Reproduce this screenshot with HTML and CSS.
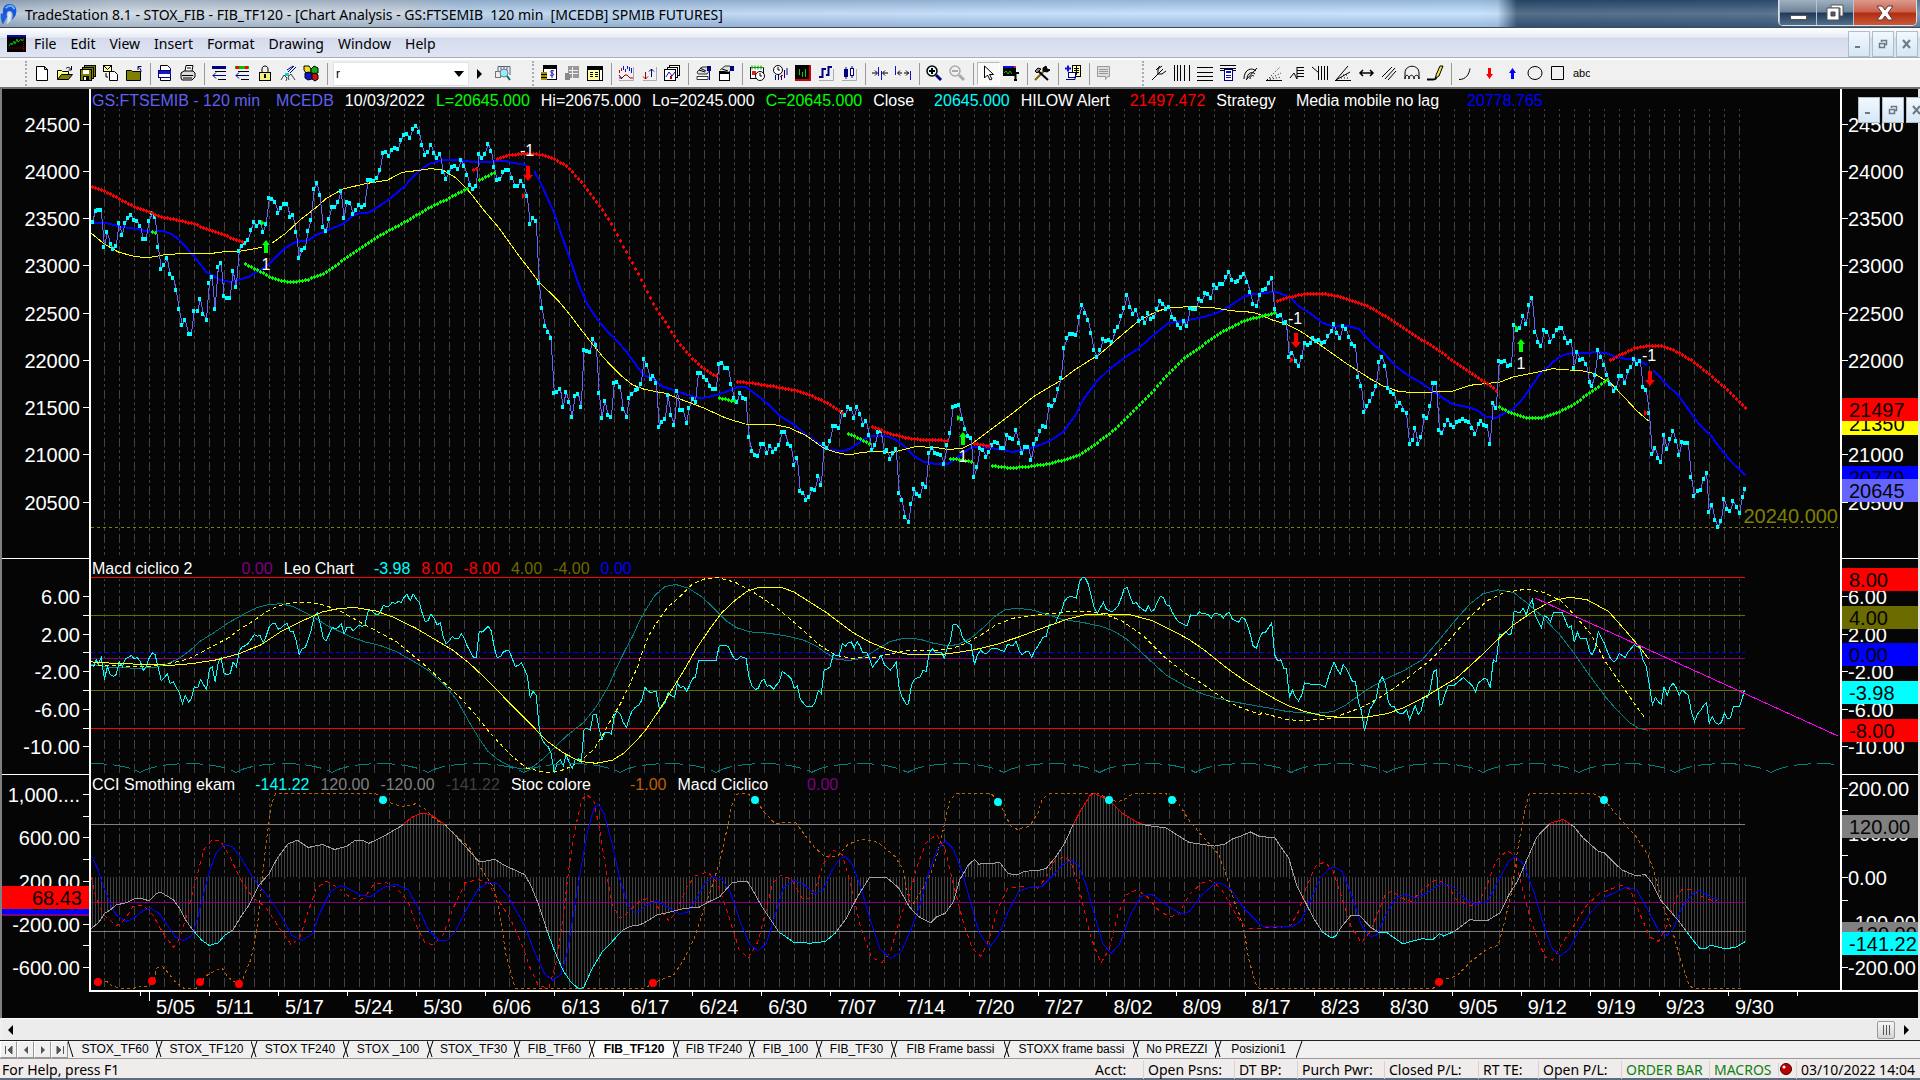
FILE: index.html
```html
<!DOCTYPE html>
<html lang="en">
<head>
<meta charset="utf-8">
<title>TradeStation 8.1 - STOX_FIB - FIB_TF120</title>
<link rel="stylesheet" href="styles.css">
</head>
<body>
<header class="titlebar">
  <svg class="app-logo" viewBox="0 0 20 26" aria-hidden="true"><path d="M3 10C3 4 8 1 13 3c5 2 5 8 3 12l-4 5c2-4 2-9-1-10-4-1-4 3-4 6l-4-2z" fill="#1557d8"/><path d="M6 7c3-4 8-3 9 1" stroke="#6db4ff" stroke-width="2" fill="none"/><path d="M1 12l7 3-5 9c-2-4-3-8-2-12z" fill="#1b63dd"/><path d="M9 11c3 0 3 4 2 9l-4 4c2-4 0-9 2-13z" fill="#d8e8f8"/></svg>
  <h1 class="title-text">TradeStation 8.1 - STOX_FIB - FIB_TF120 - [Chart Analysis - GS:FTSEMIB  120 min  [MCEDB] SPMIB FUTURES]</h1>
  <div class="window-buttons">
    <button class="win min" aria-label="Minimize"><svg width="20" height="20"><rect x="2.500" y="12.500" width="16" height="4" fill="#fff" stroke="#555"/></svg></button>
    <button class="win max" aria-label="Restore"><svg width="22" height="20"><path d="M7 2h12v11h-3V5H7z" fill="#fff" stroke="#555"/><path d="M3 5h12v12H3z" fill="#fff" stroke="#555"/><path d="M7 9h4v4H7z" fill="#557" stroke="#444"/></svg></button>
    <button class="win close" aria-label="Close"><svg width="22" height="20"><path d="M3 3h5l3 4 3-4h5l-5 7 5 7h-5l-3-4-3 4H3l5-7z" fill="#fff" stroke="#633"/></svg></button>
  </div>
</header>
<nav class="menubar">
  <svg class="doc-icon" width="19" height="17" aria-hidden="true"><rect width="19" height="17" fill="#000"/><rect width="19" height="2" fill="#0808b0"/><path d="M2 11l2-3 1 2 2-4 1 3 2-5 1 3 3-3 1 2 2-3" stroke="#0b0" fill="none"/><path d="M1 13h17M16.500 3v13" stroke="#a00" stroke-dasharray="1 1"/></svg>
  <button class="menu">File</button><button class="menu">Edit</button><button class="menu">View</button><button class="menu">Insert</button><button class="menu">Format</button><button class="menu">Drawing</button><button class="menu">Window</button><button class="menu">Help</button>
  <div class="mdi-buttons" id="mdi"></div>
</nav>
<div class="toolbar" id="toolbar">
  <div class="bar first" data-bar="file"></div>
  <div class="symbol"><input class="symbol-input" type="text" value="r" aria-label="Symbol"><button class="drop" aria-label="Recent symbols"><svg width="10" height="6"><path d="M0 0h10L5 6z"/></svg></button></div>
  <button class="go" aria-label="Go"><svg width="6" height="10"><path d="M0 0v10l5-5z"/></svg></button>
  <div class="bar lookup" data-bar="lookup"></div>
  <div class="bar chart-tools" data-bar="chart"></div>
  <div class="bar drawing-tools" data-bar="draw"></div>
</div>
<main class="chart">
  <div class="axis left" id="axisLeft"></div>
  <div class="plot">
    <svg class="plot-svg" id="plot" viewBox="91 89 1749 901" preserveAspectRatio="none" role="img" aria-label="FTSEMIB 120 minute chart with indicators"></svg>
    <div class="readout price">
      <span class="violet">GS:FTSEMIB - 120 min</span><span class="violet s1">MCEDB</span><span>10/03/2022</span><span class="lime">L=20645.000</span><span>Hi=20675.000</span><span>Lo=20245.000</span><span class="lime">C=20645.000</span><span>Close</span><span class="cyan s2">20645.000</span><span>HILOW Alert</span><span class="red s2">21497.472</span><span>Strategy</span><span class="s2">Media mobile no lag</span><span class="blue s3">20778.765</span>
    </div>
    <div class="readout macd">
      <span>Macd ciclico 2</span><span class="purple s5">0.00</span><span>Leo Chart</span><span class="cyan s2">-3.98</span><span class="red">8.00</span><span class="red">-8.00</span><span class="olive">4.00</span><span class="olive">-4.00</span><span class="blue">0.00</span>
    </div>
    <div class="readout cci">
      <span>CCI Smothing ekam</span><span class="cyan s2">-141.22</span><span class="gray">120.00</span><span class="gray">-120.00</span><span class="dim">-141.22</span><span>Stoc colore</span><span class="orange s4">-1.00</span><span>Macd Ciclico</span><span class="purple s4">0.00</span>
    </div>
    <div class="last-low">20240.000</div>
  </div>
  <div class="axis right" id="axisRight"></div>
  <div class="corner"></div>
  <div class="times" id="times"></div>
  <div class="float-buttons" id="floatButtons"></div>
</main>
<div class="scrollbar">
  <button class="arrow" aria-label="Scroll left"><svg width="6" height="10"><path d="M5 0v10L0 5z"/></svg></button>
  <div class="track"></div>
  <button class="thumb" aria-label="Scroll position"><svg width="9" height="10"><path d="M1.500 0v10M4.500 0v10M7.500 0v10" stroke="#555"/></svg></button>
  <button class="arrow" aria-label="Scroll right"><svg width="6" height="10"><path d="M0 0v10l5-5z"/></svg></button>
</div>
<div class="tabs" id="tabs">
  <button class="nav" aria-label="First tab"><svg width="10" height="10"><path d="M1.500 1v8M8 1v8L4 5z" stroke="#555" fill="#555"/></svg></button><button class="nav" aria-label="Previous tab"><svg width="10" height="10"><path d="M7 1v8L3 5z" fill="#555"/></svg></button><button class="nav" aria-label="Next tab"><svg width="10" height="10"><path d="M3 1v8l4-4z" fill="#555"/></svg></button><button class="nav" aria-label="Last tab"><svg width="10" height="10"><path d="M8.500 1v8M2 1v8l4-4z" stroke="#555" fill="#555"/></svg></button>
</div>
<footer class="status">
  <span class="help">For Help, press F1</span>
  <span class="cell acct">Acct:</span><span class="cell psns">Open Psns:</span><span class="cell dt">DT BP:</span><span class="cell purch">Purch Pwr:</span><span class="cell closed">Closed P/L:</span><span class="cell rt">RT TE:</span><span class="cell openpl">Open P/L:</span><span class="cell order green">ORDER BAR</span><span class="cell macros green">MACROS</span><span class="cell ball"><svg width="13" height="14"><circle cx="6" cy="6" r="5.500" fill="#c00000" stroke="#400"/><circle cx="4" cy="4" r="1.500" fill="#fff"/></svg></span><span class="cell date">03/10/2022 14:04</span>
</footer>
<script src="app.js"></script>
</body>
</html>
```
FILE: styles.css
```css
* { box-sizing: border-box; }
body { margin: 0; height: 100vh; display: flex; flex-direction: column; overflow: hidden; background: #f0f0f0; font-family: "Noto Sans", sans-serif; font-size: 14px; color: #000; }
button { font: inherit; color: inherit; border: 0; background: none; padding: 0; }
svg { display: block; }

.titlebar { height: 28px; flex: none; display: flex; align-items: center; position: relative; border-bottom: 1px solid #3c4a5c;
  background: linear-gradient(180deg, rgba(60,80,110,.25), rgba(255,255,255,.25) 50%, rgba(90,115,150,.3)), linear-gradient(90deg, #a3b4c6 0, #c6d1dc 6%, #bccad9 21%, #a9c8e6 24%, #aecdf0 40%, #b4d6fa 60%, #b4d8fc 77%, #b0d2f4 78%, #1e3f62 79%, #24466a 92%, #5f7c98 100%); }
.app-logo { width: 19px; height: 26px; }
.title-text { margin: 0 0 0 6px; font-size: 14px; font-weight: 400; white-space: pre; line-height: 24px; padding-top: 2px; }
.window-buttons { margin-left: auto; margin-right: 3px; align-self: flex-start; display: flex; border: 1px solid #d8e0ea; border-top: 0; border-radius: 0 0 5px 5px; overflow: hidden; }
.win { height: 25px; display: grid; place-items: center; background: linear-gradient(#9fb0c0, #6f8499 48%, #1f3a56 52%, #54708c); border-left: 1px solid #b8c4d0; }
.win.min, .win.max { width: 37px; }
.win.close { width: 63px; background: linear-gradient(#dc9a8c, #c9604c 48%, #b02c10 52%, #c85a38); }

.menubar { height: 30px; flex: none; display: flex; align-items: center; padding: 2px 2px 0 7px; background: linear-gradient(#fff, #e8ecf5 30%, #d5dbec 36%, #dfe5f3); border-bottom: 1px solid #a8acb4; }
.doc-icon { margin-right: 8px; }
.menu { margin-right: 14px; line-height: 20px; }
.mdi-buttons, .float-buttons { display: flex; gap: 2px; }
.mdi-buttons { margin-left: auto; }
.mdi { width: 22px; height: 26px; display: grid; place-items: center; background: linear-gradient(#f2f8fd, #d6e7f6); border: 1px solid #aebccb; }

.toolbar { height: 31px; flex: none; display: flex; align-items: center; background: #f0f0f0; border-top: 2px solid #fff; border-bottom: 2px solid #707070; }
.bar { display: flex; align-items: center; }
.bar.first, .bar.chart-tools, .bar.drawing-tools { padding-left: 4px; height: 25px; border-left: 2px dotted #a8adb5; }
.bar.first { margin-left: 25px; }
.bar.lookup { margin-left: 1px; margin-right: 17px; }
.bar.drawing-tools { margin-left: 26px; }
.tool { width: 23px; height: 23px; display: grid; place-items: center; }
.tool.pressed { background: #fafafa; border: 1px solid #b8b8b8; border-right-color: #fff; border-bottom-color: #fff; }
.tool-sep { width: 8px; height: 22px; display: flex; justify-content: center; }
.tool-sep::before { content: ""; width: 1px; background: #9a9a9a; }
.symbol { display: flex; align-items: center; width: 136px; height: 24px; margin-left: 2px; background: #fff; border: 1px solid #dde3ea; }
.symbol-input { border: 0; flex: 1; min-width: 0; background: none; font: 12px "Liberation Sans", sans-serif; padding: 0 2px; }
.drop { width: 18px; display: grid; place-items: center; }
.go { width: 22px; display: grid; place-items: center; }

.chart { flex: 1; min-height: 0; position: relative; display: grid; grid-template-columns: 89px 1fr 78px; grid-template-rows: 1fr 28px; background: #050505; color: #fff; border-left: 2px solid #808080; border-right: 2px solid #e4e4e4; font-family: "Liberation Sans", sans-serif; }
.axis { position: relative; font-size: 20px; overflow: hidden; }
.axis.left { border-right: 2px solid #fff; }
.axis.right { border-left: 2px solid #fff; }
.plot { position: relative; min-width: 0; }
.plot-svg { position: absolute; inset: 0; width: 100%; height: 100%; }
.tick-label { position: absolute; height: 24px; line-height: 24px; margin-top: -12px; }
.left .tick-label { right: 9px; }
.right .tick-label { left: 6px; }
.tick { position: absolute; width: 6px; height: 1px; background: #fff; }
.left .tick { right: 0; }
.right .tick { left: 0; }
.divider { position: absolute; left: 0; right: 0; height: 1px; background: #fff; }
.badge { position: absolute; left: 0; right: 0; height: 23px; margin-top: -12px; line-height: 24px; color: #050505; }
.right .badge { padding-left: 7px; }
.left .badge { padding-right: 7px; text-align: right; }
.corner { grid-column: 1; }
.times { grid-column: 2 / 4; position: relative; border-top: 2px solid #fff; margin-left: -2px; font-size: 20px; }
.time-label { position: absolute; top: 3px; line-height: 24px; }
.time-tick { position: absolute; top: 0; width: 1px; height: 4px; background: #fff; }
.time-tick.month { height: 9px; }
.readout { position: absolute; left: 1px; display: flex; gap: 11px; font-size: 16px; line-height: 20px; white-space: nowrap; }
.readout.price { top: 2px; }
.readout.macd { top: 52%; margin-top: 1px; }
.readout.cci { top: 76%; margin-top: 1px; }
.s1 { margin-left: 5px; }
.s2 { margin-left: 9px; }
.s3 { margin-left: 17px; }
.s4 { margin-left: 28px; }
.s5 { margin-left: 38px; }
.violet { color: #6060f0; } .lime { color: #00ff00; } .cyan { color: #00ffff; } .red { color: #ff0000; } .blue { color: #0000ff; }
.purple { color: #800080; } .olive { color: #6b6b00; } .gray { color: #808080; } .dim { color: #404040; } .orange { color: #c06000; }
.last-low { position: absolute; right: 2px; top: 46%; margin-top: 1px; font-size: 20px; line-height: 24px; color: #808000; }
.float-buttons { position: absolute; top: 8px; left: calc(100% - 60px); }
.float-buttons .mdi { flex: none; }

.signal { fill: #fff; font: 16px "Liberation Sans", sans-serif; text-anchor: middle; }
.line { fill: none; stroke-width: 1; shape-rendering: crispEdges; }
.line.wide { stroke-width: 2; }
.grid { stroke: #424242; stroke-dasharray: 9 3 3 3 3 3; stroke-dashoffset: 7; }
.price-line { stroke: #6464f0; }
.line.price-dots { stroke: #00ffff; stroke-width: 4; }
.line.average { stroke: #0000ff; stroke-width: 2; }
.yellow { stroke: #ffff00; }
.yellow-dash { stroke: #ffff00; stroke-dasharray: 4 3; }
.low-line { stroke: #808000; stroke-dasharray: 3 3; }
.teal { stroke: #008080; }
.arcs { stroke: #008080; stroke-dasharray: 17 6; }
.leo { stroke: #00ffff; }
.magenta { stroke: #ff00ff; }
.bars { stroke: #404040; }
.stoc { stroke: #c06000; stroke-dasharray: 3 3; }
.fast { stroke: #ff0000; stroke-dasharray: 4 4; }
.slow { stroke: #0000ff; }
.cci-mid { stroke: #a0a0a0; } .cci-high { stroke: #ff0000; } .cci-low { stroke: #00ffff; }

.scrollbar { height: 22px; flex: none; display: flex; align-items: center; background: #ececec; border-top: 1px solid #fff; margin-left: 2px; padding-right: 4px; }
.arrow { width: 18px; display: grid; place-items: center; }
.track { flex: 1; }
.thumb { width: 18px; height: 18px; display: grid; place-items: center; border: 1px solid #999; border-radius: 2px; background: linear-gradient(#f6f6f6, #d4d4d4); margin-right: 3px; }
.tabs { height: 19px; flex: none; display: flex; background: #f0f0f0; border-top: 1px solid #222; border-bottom: 1px solid #999; font: 12px/17px "Liberation Sans", sans-serif; }
.nav { width: 17px; display: grid; place-items: center; border: 1px solid #999; border-top-color: #fff; border-left-color: #fff; }
.tab { flex: none; position: relative; padding: 0 0 0 6px; text-align: center; white-space: nowrap; }
.tab svg { position: absolute; left: 0; top: 0; }
.tab.active { background: #fff; font-weight: 700; }
.tab-end { width: 10px; }
.status { height: 21px; flex: none; display: flex; align-items: center; background: #f0eceb; border-bottom: 2px solid #5b6b80; line-height: 18px; padding-top: 2px; white-space: nowrap; }
.help { padding-left: 2px; margin-right: auto; }
.cell { padding-left: 4px; border-left: 1px solid #d6d2d1; }
.acct { border: 0; width: 52px; } .psns { width: 91px; } .dt { width: 63px; } .purch { width: 87px; } .closed { width: 94px; } .rt { width: 60px; } .openpl { width: 83px; }
.order { width: 88px; } .macros { width: 69px; } .ball { width: 18px; padding-left: 1px; } .date { width: 124px; }
.green { color: #108010; }
```
FILE: app.js
```js
const NS = 'http://www.w3.org/2000/svg';
const plot = document.getElementById('plot');

/* Series are recorded in three time sections, each with its own origin and scale. */
const sections = [[0, 2.45], [600, 2.376], [1240, 2.306]];
const priceY = y => 90 + y / 3;
const lowerY = y => 550 + y / 2.958;

function join(toY, ...parts) {
  const out = [];
  parts.forEach((part, i) => {
    if (!part) return;
    part.trim().split(/\s+/).forEach(pair => {
      const [px, py] = pair.split(',').map(Number);
      const x = sections[i][0] + px / sections[i][1];
      if (!out.length || x > out[out.length - 1][0] + 0.5) out.push([x, toY(py)]);
    });
  });
  return out;
}
function add(tag, attrs, text) {
  const el = document.createElementNS(NS, tag);
  for (const k in attrs) el.setAttribute(k, attrs[k]);
  if (text) el.textContent = text;
  plot.appendChild(el);
  return el;
}
const path = (cls, d, extra) => add('path', Object.assign({ class: 'line ' + cls, d }, extra));
const toPath = pts => 'M' + pts.map(p => p[0].toFixed(1) + ' ' + p[1].toFixed(1)).join('L');
const valueAt = (pts, x) => {
  for (let i = 1; i < pts.length; i++) if (pts[i][0] >= x) {
    const [a, b] = [pts[i - 1], pts[i]];
    return a[1] + (b[1] - a[1]) * (x - a[0]) / (b[0] - a[0]);
  }
  return pts[pts.length - 1][1];
};
function marks(color, pts) {
  let d = '', e = '';
  for (let x = 92.5; x <= pts[pts.length - 1][0] + 1; x += 3) {
    if (x < pts[0][0] - 1) continue;
    const y = Math.round(valueAt(pts, x));
    d += `M${x} ${y - 2}v4`; e += `M${x - 1.5} ${y}h3`;
  }
  path('', d, { stroke: color });
  path('wide', e, { stroke: color });
}
const END = 1745;
const level = (color, y, dash) => path('', `M91 ${y}H${END}`, { stroke: color, 'stroke-dasharray': dash || 'none' });

/* grid */
let grid = '';
for (let k = 0; k < 110; k++) {
  const x = 104.5 + 15 * k;
  grid += `M${x} 109V555M${x} 579V773M${x} 793V989`;
}
path('grid', grid);

/* price panel */
const price = join(priceY,
`227,395 234,362 241,361 248,360 256,471 263,426 271,463 278,477 285,468 292,399 300,434 307,398 314,384 322,376 329,390 336,393 344,407 351,446 358,446 366,393 373,370 380,381 388,470 395,536 402,524 410,505 417,553 425,564 432,600 439,657 447,704 454,689 462,731 469,731 476,662 484,662 491,627 498,671 506,689 513,578 520,560 527,656 535,530 542,519 549,617 557,624 564,624 571,543 579,590 586,484 593,467 601,459 608,451 615,420 623,396 630,407 637,396 645,426 652,402 660,323 667,326 674,335 682,369 689,353 697,342 704,342 711,380 718,375 726,425 733,503 740,480 748,473 755,423 762,390 770,298 777,279 784,314 792,411 799,424 806,387 814,351 821,351 828,337 836,303 843,384 850,336 858,339 865,372 872,360 880,345 887,350 894,345 902,269 909,271 917,273 924,264 931,239 939,189 946,185 953,198 961,179 968,174 976,176 983,149 990,136 997,131 1005,144 1012,116 1020,107 1027,125 1034,164 1042,195 1049,185 1056,164 1064,189 1071,203 1079,192 1086,245 1093,267 1101,246 1108,230 1115,228 1123,237 1130,209 1137,227 1145,255 1152,284 1160,297 1167,287 1174,192 1181,203 1189,192 1196,161 1204,183 1211,231 1218,271 1226,267 1233,247 1240,239 1247,239 1255,264 1262,287 1270,287 1277,272 1284,289 1292,318 1299,401 1306,384 1314,393 1321,578 1328,654 1336,707 1343,725 1350,743 1358,908 1365,905 1373,896 1380,950 1387,905 1395,936 1402,981 1409,917 1417,911 1424,950 1431,780 1438,782 1446,785 1453,747 1461,765 1468,908 1475,984 1482,932 1490,974 1498,981 1505,880 1512,876 1520,891 1527,956 1535,981 1542,924 1549,911 1557,900 1564,897`,
`98,882 105,808 112,825 120,866 127,857 134,879 141,1011 148,996 155,987 162,915 169,975 177,1004 184,903 191,960 198,960 206,999 212,954 220,927 227,935 234,849 241,849 248,862 255,870 262,888 269,897 276,897 283,823 290,819 298,833 305,834 312,882 319,924 326,936 333,908 340,924 347,927 354,1041 361,1082 369,1096 376,1098 383,1062 390,1062 397,1090 404,1067 412,1085 419,1077 426,1064 433,1025 440,1027 447,1061 454,1067 462,1124 469,1103 476,1203 483,1208 490,1230 497,1220 504,1196 511,1200 519,1157 526,1185 533,1061 540,1074 547,1053 554,1007 561,1008 568,1014 576,966 583,975 590,951 597,957 604,983 611,951 618,971 625,1005 633,993 640,1035 647,1080 654,1064 661,1025 668,1023 676,1085 683,1081 690,1107 697,1088 704,1076 711,1209 718,1229 725,1281 733,1297 740,1241 747,1196 754,1212 761,1218 768,1181 775,1191 782,1088 790,1074 797,1090 804,1093 811,1094 818,1122 825,1066 832,1029 839,950 847,948 854,944 861,988 868,1018 875,1037 882,1044 889,1161 896,1131 904,1075 911,1081 918,1102 925,1086 932,1064 939,1055 946,1059 953,1074 961,1075 968,1034 975,1043 982,1048 989,1020 996,1060 1003,1090 1010,1071 1018,1071 1025,1110 1032,1061 1039,1048 1046,1022 1053,1007 1060,1011 1067,944 1075,948 1082,930 1089,897 1096,863 1103,774 1110,743 1117,732 1124,732 1132,736 1139,680 1146,645 1153,668 1160,689 1167,729 1174,780 1182,801 1189,780 1196,747 1203,752 1210,750 1217,757 1224,723 1231,711 1239,678 1246,653 1253,614 1260,650 1267,672 1274,659 1281,692 1289,684 1296,699 1303,668 1310,687 1317,681 1324,656 1331,632 1338,641 1346,656 1353,650 1360,680 1367,687 1374,706 1381,714 1388,692 1395,708 1403,653 1410,657 1417,657 1424,627 1431,633 1438,610 1445,611 1452,624 1459,584 1467,593 1474,583 1481,582 1488,562 1495,545 1502,570 1510,576 1517,573 1524,561 1531,551 1538,575 1545,605 1552,641 1560,648 1567,614`,
`52,600 59,597 66,578 73,564 80,657 87,677 94,675 101,698 107,697 114,801 121,789 128,813 135,828 142,801 149,758 156,764 163,759 169,744 176,753 183,750 190,758 197,757 204,738 211,724 217,702 224,729 231,744 238,708 245,717 252,741 259,762 266,768 273,861 280,888 287,966 294,948 300,933 307,911 314,888 321,815 328,801 335,827 342,893 349,905 356,911 363,947 370,938 377,959 384,969 391,1062 398,1049 404,1013 411,1062 418,1041 425,977 432,983 439,947 446,878 453,879 460,1020 466,1029 473,1004 480,989 487,1004 494,1011 501,996 508,993 515,987 522,992 529,995 536,1013 543,1032 550,1001 556,992 563,1004 570,1007 577,1062 584,938 591,954 598,813 605,815 612,813 619,828 626,825 632,705 639,720 646,714 653,677 660,702 667,645 674,623 681,726 688,755 695,768 702,719 709,726 716,756 723,738 730,719 737,713 743,714 750,743 757,759 764,752 771,834 778,786 785,810 792,807 799,823 806,876 812,887 819,855 826,779 833,801 840,825 847,855 854,882 862,902 868,893 875,858 881,857 888,879 895,843 902,831 909,806 916,822 923,813 930,891 937,899 944,968 951,1092 958,1073 965,1104 971,1116 978,1034 985,1076 992,1047 999,1022 1006,1053 1013,1095 1020,1055 1027,1058 1034,1058 1041,1160 1048,1217 1055,1202 1062,1199 1069,1166 1076,1148 1082,1266 1089,1244 1096,1290 1103,1310 1110,1293 1117,1226 1124,1257 1131,1262 1138,1232 1145,1251 1152,1269 1159,1220 1165,1196`);

path('low-line', 'M91 527H1838');

path('average', toPath(join(priceY, `224,398 262,400 300,411 330,416 366,425 400,424 420,432 440,450 476,500 505,545 535,568 565,576 590,568 610,560 640,538 660,522 697,475 725,455 755,451 775,435 800,422 840,402 870,372 905,367 930,348 960,322 990,290 1020,250 1050,222 1085,210 1130,211 1160,217 1200,216 1215,212 1240,213 1255,219 1280,222 1292,228`)));
path('average', toPath(join(priceY,
`1309,244 1325,280 1340,320 1358,370 1380,450 1400,520 1420,590 1440,645 1465,690 1485,720 1510,750 1535,785 1566,838`,
`105,857 125,865 150,890 180,902 215,918 235,924 255,922 285,912 310,900 325,892 345,890 360,903 390,932 410,955 430,980 460,1003 490,1035 520,1060 545,1080 580,1083 600,1072 630,1045 650,1037 680,1039 700,1047 720,1065 745,1098 770,1115 800,1123 825,1123 850,1102 875,1078 890,1070 910,1074 945,1076 980,1086 1000,1080 1035,1070 1070,1052 1100,1027 1130,975 1150,925 1180,875 1210,838 1245,805 1280,775 1320,730 1350,700 1390,692 1430,682 1465,670 1500,645 1530,620 1555,611 1568,611`,
`50,608 85,607 108,617 120,628 135,648 160,668 190,698 215,710 250,708 275,718 300,755 330,787 360,830 390,858 420,880 450,908 490,943 530,952 550,963 565,979 590,984 610,970 630,958 655,922 690,855 720,818 740,798 765,789 830,787 850,791 870,804 900,807 920,812 940,825`)));
path('average', toPath(join(priceY, '', '', `953,840 960,850 985,885 1010,915 1035,960 1060,1005 1085,1035 1110,1080 1135,1118 1165,1156`)));

path('yellow', toPath(join(priceY, `224,430 255,462 290,486 325,498 360,504 400,495 450,490 520,490 545,486 590,483 630,475 643,471`)));
path('yellow', toPath(join(priceY,
`667,459 700,430 735,390 770,357 800,325 840,297 895,281 950,270 985,247 1020,242 1055,236 1085,240 1115,262 1150,305 1185,360 1220,410 1270,495 1320,575 1370,635 1400,680 1440,745 1480,805 1520,855 1550,885 1566,892`,
`105,898 155,910 200,932 245,953 300,985 345,1002 410,1003 450,1013 490,1037 530,1073 560,1087 590,1095 625,1087 655,1084 695,1088 720,1079 750,1070 795,1072 825,1078 860,1076 885,1060 925,1022 980,970 1030,920 1060,897 1090,875 1130,838 1190,790 1240,735 1280,693 1305,675 1325,664 1350,653 1400,650 1450,652 1500,662 1550,667 1568,674`,
`75,690 110,704 145,728 185,765 245,820 300,866 330,888 365,904 400,908 490,904 530,886 600,876 630,861 680,848 720,836 790,843 815,850 855,880 885,920 915,962 942,993`)));

path('price-line', toPath(price));
path('price-dots', price.map(p => `M${Math.round(p[0]) - 2} ${Math.round(p[1])}h3`).join(''));

const RED = '#ff0000', GREEN = '#00ff00';
marks(RED, join(priceY, `224,289 248,299 270,312 300,332 330,350 355,363 375,370 388,379 420,387 470,400 510,418 550,436 580,450 598,458`));
marks(RED, join(priceY, `1160,239 1169,237`));
marks(RED, join(priceY, `1218,208 1245,197 1275,192 1300,191 1330,196 1360,208 1390,230 1420,270 1445,310 1470,350 1490,385 1510,430 1530,475 1550,520 1566,557`, `100,575 130,650 160,705 185,755 215,800 245,835 278,860`));
marks(RED, join(priceY, '', `326,875 370,881 420,891 470,903 500,915 540,940 580,972`));
marks(RED, join(priceY, '', `647,1010 680,1027 720,1042 760,1049 828,1052`));
marks(RED, join(priceY, '', `889,1062 928,1069`));
marks(RED, join(priceY, '', '', `87,634 110,622 150,613 190,612 230,620 260,632 300,652 350,690 400,733 450,775 500,820 550,865 592,902`));
marks(RED, join(priceY, '', '', `854,811 880,793 910,775 940,767 970,768 1000,780 1040,810 1080,850 1120,895 1165,954`));
marks(GREEN, join(priceY, `373,427 381,428`));
marks(GREEN, join(priceY, `601,522 630,540 660,560 690,573 715,577 755,569 790,553 830,520 870,487 910,453 950,423 990,398 1050,355 1100,325 1150,293`));
marks(GREEN, join(priceY, `1174,272 1211,248`));
marks(GREEN, join(priceY, '', `284,925 321,934`));
marks(GREEN, join(priceY, '', `590,1031 612,1043 643,1064`));
marks(GREEN, join(priceY, '', `832,1106 860,1110 884,1116`));
marks(GREEN, join(priceY, '', `932,1128 980,1134 1020,1130 1070,1121 1105,1109 1140,1095 1180,1060 1225,1017 1265,965 1310,910 1345,858 1390,803 1430,768 1480,724 1530,693 1568,680`, `82,669`));
marks(GREEN, join(priceY, '', '', `598,951 625,970 660,984 700,983 735,967 770,943 810,905 848,870`));

/* strategy signals: x, arrow top, label baseline, marker x, marker y */
[[266, 240, 270, 263, 223], [963, 432, 462, 959, 418], [1521, 339, 369, 1517, 328]].forEach(([x, y, t, mx, my]) => {
  add('path', { d: `M${x} ${y}l4 5h-2v8h-4v-8h-2zM${mx - 2} ${my - 3}v6l4-3z`, fill: GREEN });
  add('text', { x, y: t, class: 'signal' }, '1');
});
[[528, 166, 156, 524, 196], [1296, 333, 324, 1292, 360], [1650, 371, 361, 1646, 413]].forEach(([x, y, t, mx, my]) => {
  add('path', { d: `M${x - 2} ${y}h4v9h3l-5 6-5-6h3zM${mx - 2} ${my - 3}v6l4-3z`, fill: RED });
  add('text', { x: x - 1, y: t, class: 'signal' }, '-1');
});

/* Leo chart panel */
level(RED, 577.5); level('#6b6b00', 615.5); level('#0000ff', 652.5, '4 3'); level('#800080', 658.5); level('#6b6b00', 690.5); level(RED, 728.5);
path('teal', toPath(join(lowerY,
`224,338 270,347 340,350 380,348 410,337 440,320 465,298 490,270 520,248 560,215 600,188 630,170 660,161 690,159 720,168 745,183 770,200 800,222 830,240 860,257 895,272 930,282 970,300 1010,327 1050,357 1090,400 1120,445 1150,510 1175,560 1195,595 1220,620 1250,640 1280,648 1305,642 1330,618 1360,582 1390,548 1430,510 1460,465 1490,405 1510,350 1530,300 1550,255 1566,212`,
`105,185 130,135 155,108 180,102 210,113 240,137 265,165 300,210 325,230 355,242 400,246 450,256 485,267 515,285 535,303 560,322 590,327 615,322 640,308 665,288 690,270 725,261 760,264 790,275 825,283 850,280 880,262 910,230 935,200 960,178 990,172 1030,178 1060,190 1095,204 1150,215 1190,225 1220,240 1250,262 1280,295 1310,330 1345,370 1390,402 1430,425 1465,438 1510,450 1568,463`,
`60,466 110,478 170,484 215,478 245,458 290,415 330,386 380,355 420,325 460,265 495,210 530,160 560,130 595,118 630,125 665,160 700,200 740,255 770,305 800,360 840,430 870,475 900,512 920,528 942,533`)));
path('yellow-dash', toPath(join(lowerY,
`224,342 300,343 370,343 400,338 430,332 460,322 490,305 520,285 560,260 590,232 620,210 650,185 680,166 710,157 740,154 770,157 800,165 840,185 880,212 930,245 970,270 1010,310 1045,345 1090,395 1130,440 1160,480 1200,540 1250,605 1290,645 1335,658 1370,655 1400,640 1430,615 1455,590 1480,540 1500,495 1520,455 1540,405 1566,335`,
`95,320 115,255 135,215 160,170 190,138 220,100 250,85 280,82 320,95 355,118 390,145 420,172 450,202 480,235 520,280 560,312 600,320 650,318 700,305 730,298 800,297 840,290 870,275 910,248 940,222 980,202 1030,193 1080,187 1120,181 1165,182 1200,190 1240,210 1290,252 1340,315 1385,360 1430,395 1470,430 1510,460 1568,487`,
`50,482 110,502 150,505 210,498 250,480 280,466 320,438 360,405 400,365 440,325 480,270 520,210 570,150 610,125 660,116 700,125 740,150 780,205 810,250 840,325 880,400 910,455 935,498`)));
path('leo', toPath(join(lowerY,
`224,340 229,345 236,325 241,338 248,318 256,383 263,345 270,368 278,374 285,368 292,330 300,345 307,322 314,318 322,312 329,322 336,318 344,330 351,356 358,345 366,318 373,304 380,310 388,350 395,386 402,378 410,367 417,395 425,390 432,408 439,420 447,455 454,430 462,450 469,440 476,405 484,408 491,383 498,398 506,412 513,352 520,345 527,390 535,330 542,320 549,366 557,368 564,366 571,332 579,345 586,300 593,287 601,283 608,276 615,265 623,250 630,255 637,253 645,275 652,255 660,226 667,218 674,217 682,234 689,230 697,220 704,218 711,242 718,240 726,270 733,310 740,293 748,288 755,265 762,240 770,195 777,186 784,215 792,262 799,268 806,250 814,229 821,233 828,230 836,218 843,248 850,229 858,228 865,240 872,232 880,222 887,226 894,222 902,180 909,178 917,187 924,193 931,185 939,165 946,166 953,166 961,155 968,158 976,152 983,155 990,140 997,131 1005,150 1012,130 1020,145 1027,155 1034,185 1042,213 1049,208 1056,190 1064,203 1071,222 1079,215 1086,260 1093,277 1101,268 1108,256 1115,262 1123,263 1130,247 1137,260 1145,285 1152,300 1160,318 1167,318 1174,240 1181,243 1189,235 1196,225 1204,240 1211,290 1218,318 1226,316 1233,302 1240,298 1247,298 1255,320 1262,344 1270,342 1277,333 1284,350 1292,372 1299,436 1306,418 1314,430 1321,528 1328,560 1336,575 1343,582 1350,600 1358,658 1365,630 1373,620 1380,638 1387,605 1395,630 1402,645 1409,620 1417,618 1424,628 1431,530 1438,528 1446,532 1453,488 1461,487 1468,530 1475,562 1482,540 1490,538 1498,545 1505,490 1512,476 1520,487 1527,510 1535,525 1542,495 1549,475 1557,465 1566,458`,
`99,445 107,405 114,418 121,422 133,418 141,470 148,462 155,450 162,422 169,430 177,435 184,393 191,408 198,403 206,417 213,400 220,380 227,376 234,326 241,326 276,326 283,285 290,282 305,285 312,305 319,322 326,325 333,315 347,320 354,375 361,402 369,412 376,410 383,388 390,383 397,403 404,400 412,412 419,400 426,390 433,360 440,365 447,372 454,380 462,410 469,402 476,442 483,452 490,463 504,463 511,450 519,415 526,425 533,352 540,352 547,345 554,310 568,312 576,278 583,285 590,274 597,272 604,290 611,270 618,285 625,305 633,302 640,320 647,347 661,325 668,312 676,340 690,355 697,345 704,332 711,410 718,435 728,458 733,455 740,400 747,382 761,375 768,355 775,360 782,305 790,292 797,304 811,302 818,320 825,290 832,270 839,220 847,220 856,235 861,258 868,270 875,276 882,280 890,340 896,312 904,296 911,304 918,306 932,290 946,293 953,298 961,300 968,280 982,282 989,270 996,298 1003,310 1010,302 1018,300 1026,318 1032,300 1039,287 1053,258 1060,256 1067,222 1082,218 1089,195 1096,183 1103,152 1110,142 1117,137 1132,142 1139,95 1146,82 1153,83 1160,100 1167,135 1174,170 1182,187 1189,170 1196,155 1203,175 1217,183 1224,175 1231,165 1239,140 1246,113 1253,112 1260,140 1267,160 1274,155 1281,168 1296,182 1303,165 1310,182 1317,176 1324,155 1331,138 1338,140 1346,162 1353,165 1360,185 1367,200 1374,212 1388,220 1395,225 1403,192 1417,195 1424,183 1431,188 1445,190 1452,202 1459,188 1474,190 1481,202 1488,190 1495,184 1502,204 1517,214 1524,200 1531,202 1538,220 1545,250 1552,285 1560,290 1567,260`,
`52,245 59,243 66,230 73,216 80,310 87,328 94,325 101,350 107,350 114,435 121,415 128,435 135,446 142,430 149,393 163,397 183,397 197,406 204,375 211,350 217,332 224,352 231,367 238,340 245,350 259,388 266,388 273,450 280,475 287,536 294,500 300,470 314,440 321,390 328,375 335,395 342,450 349,463 356,463 363,480 370,485 377,483 384,472 391,503 398,480 404,460 411,487 418,475 425,433 432,437 439,410 446,360 453,355 460,460 466,455 473,425 480,402 494,400 508,385 515,377 522,385 536,402 543,420 550,393 563,380 570,383 577,408 584,325 591,330 598,250 605,252 612,242 619,250 626,248 632,182 646,185 653,172 660,192 667,165 674,147 681,195 688,213 695,230 702,195 709,200 716,212 723,185 743,186 750,207 757,230 764,224 771,272 778,243 785,262 799,262 806,300 812,310 819,290 826,242 840,275 847,300 854,320 862,330 868,325 875,306 888,318 895,302 909,280 923,292 930,328 937,345 944,400 951,458 958,436 965,450 971,456 978,405 985,430 992,405 999,394 1006,408 1013,430 1020,414 1034,430 1041,480 1048,507 1055,485 1062,475 1069,460 1076,452 1082,512 1089,492 1096,510 1103,516 1110,510 1117,483 1124,498 1131,497 1138,462 1152,463 1159,435 1163,415`)));
path('yellow', toPath(join(lowerY,
`224,331 290,336 350,338 420,341 470,336 530,325 585,307 640,280 690,240 740,210 790,183 830,173 870,170 920,180 960,197 1020,232 1070,268 1110,297 1150,335 1200,392 1250,455 1300,515 1340,565 1380,600 1420,625 1460,631 1500,622 1530,600 1566,555`,
`110,530 140,475 170,415 200,355 230,290 260,235 290,185 320,150 350,122 380,110 430,110 460,124 500,155 540,187 570,215 600,243 640,272 690,298 730,308 810,309 850,303 890,295 940,280 1000,255 1060,227 1110,205 1150,192 1200,189 1260,192 1310,208 1360,238 1400,265 1440,300 1490,350 1530,385 1568,415`,
`80,440 110,460 150,478 190,490 240,497 290,495 340,484 380,465 430,432 500,378 550,320 590,270 630,222 680,178 720,150 760,140 800,147 850,182 890,240 920,285 942,322`)));
path('magenta', 'M1535 598L1838 736');
let arcs = '';
for (let n = 0; n < 19; n++) {
  const x = 45 + 95.95 * n;
  arcs += `M${x} 772Q${x + 14} 764 ${x + 48} 763.5Q${x + 80} 764 ${x + 96} 773`;
}
path('arcs', arcs, { 'clip-path': 'url(#inside)' });

/* CCI panel */
const cci = join(lowerY,
`224,1120 243,1100 256,1075 270,1065 285,1050 310,1043 330,1031 350,1032 366,1038 385,1015 395,1013 425,1035 440,1060 455,1095 475,1128 495,1155 513,1170 525,1165 535,1162 550,1140 570,1125 590,1085 610,1050 635,990 658,960 680,910 705,870 728,858 755,880 790,871 820,886 850,876 870,859 890,860 903,868 935,850 985,815 1010,790 1035,778 1055,783 1090,812 1120,850 1150,890 1172,920 1190,920 1212,915 1235,932 1285,960 1300,990 1320,1050 1340,1125 1360,1190 1380,1245 1400,1280 1418,1298 1430,1294 1450,1240 1475,1190 1500,1158 1525,1125 1545,1113 1566,1109`,
`105,1103 135,1080 155,1074 200,1060 235,1057 260,1040 285,1025 315,983 350,980 360,1000 385,1055 425,1130 460,1160 500,1163 535,1158 560,1132 585,1090 610,1030 640,969 680,968 710,1000 735,1055 755,1083 785,1103 800,1085 820,1075 840,1040 855,975 875,932 890,915 900,929 950,925 970,957 990,961 1010,950 1040,948 1060,942 1085,905 1105,865 1125,810 1145,765 1165,725 1175,720 1210,740 1240,778 1280,808 1300,815 1345,822 1370,842 1400,865 1460,876 1485,870 1505,853 1525,845 1545,834 1568,848`,
`80,850 95,880 112,910 130,990 150,1040 170,1090 190,1130 210,1147 220,1143 235,1113 255,1082 275,1080 300,1115 320,1131 340,1133 375,1165 395,1158 420,1150 445,1152 460,1135 470,1142 495,1127 530,1094 570,1097 600,1073 620,1020 640,980 660,920 685,848 715,808 745,797 770,818 790,850 825,890 840,896 880,946 910,962 935,961 950,985 970,1035 1010,1095 1045,1155 1060,1178 1075,1178 1085,1169 1120,1180 1145,1174 1165,1158`);
let bars = '';
for (let x = 92.5; x < END + 1; x += 3) bars += `M${x} 877V${valueAt(cci, x).toFixed(1)}`;
path('bars', bars);
level('#808080', 824.5); level('#808080', 931.5); level('#800080', 902.5);
path('stoc', toPath(join(lowerY,
`229,1282 243,1276 262,1276 275,1290 300,1298 325,1298 340,1290 365,1290 375,1275 385,1235 397,1231 415,1255 430,1278 450,1296 480,1298 491,1278 510,1255 543,1235 560,1265 580,1282 595,1268 615,1210 630,1120 645,940 655,840 665,750 675,721 920,720 940,738 960,750 990,760 1020,750 1040,765 1060,790 1100,825 1150,880 1180,945 1210,1000 1225,1080 1240,1200 1262,1296 1566,1298`,
`105,1298 127,1280 175,1257 200,1210 225,1145 245,1070 265,1000 285,920 300,835 312,760 325,722 350,720 370,738 390,775 415,808 465,806 485,840 510,880 535,908 565,905 590,870 625,855 660,865 700,905 720,945 735,1040 745,1045 765,1005 785,960 800,905 815,830 830,745 845,721 930,721 946,742 960,775 975,815 990,826 1020,818 1040,780 1050,740 1065,721 1185,721 1210,738 1230,745 1250,735 1265,721 1345,721 1370,740 1400,800 1430,845 1470,900 1490,970 1510,1050 1520,1080`,
`10,1130 20,1210 35,1280 45,1297 445,1297 460,1275 500,1260 530,1220 570,1180 595,1170 610,1100 625,1020 640,890 655,780 667,721 815,721 840,738 860,770 890,815 915,850 940,900 955,950 975,1050 1000,1140 1015,1210 1035,1285 1045,1297 1160,1297`)));
path('fast', toPath(join(lowerY,
`224,968 235,1030 255,1080 285,1112 305,1095 325,1055 350,1050 375,1080 400,1135 425,1175 440,1150 460,1070 480,975 500,885 520,857 540,860 560,900 590,975 620,1030 650,1055 680,1110 715,1170 735,1145 755,1070 775,1000 800,980 830,1000 855,1025 880,1036 895,1025 915,990 945,983 970,998 1000,1040 1020,1110 1040,1160 1060,1168 1085,1140 1110,1060 1140,985 1170,974 1195,985 1220,1035 1250,1090 1280,1170 1300,1240 1320,1290 1345,1295 1365,1210 1380,1080 1395,930 1410,820 1425,740 1438,722 1455,745 1470,830 1485,950 1500,1050 1520,1090 1545,1065 1566,1040`,
`115,1030 140,1060 165,1098 185,1060 205,1000 225,965 255,952 280,985 305,1080 330,1180 352,1208 375,1160 395,1065 410,985 430,962 455,975 480,1030 495,1032 515,990 530,930 555,889 575,900 595,985 620,1120 645,1205 670,1220 690,1190 715,1080 735,1020 755,930 775,865 800,842 820,885 840,990 865,1110 885,1180 905,1202 925,1150 945,1060 970,1000 1000,995 1040,1000 1060,970 1080,920 1103,906 1120,925 1140,1010 1165,1140 1190,1222 1210,1180 1230,1080 1250,1020 1275,1005 1300,1025 1330,1070 1355,1085 1375,1078 1400,1020 1430,985 1450,978 1475,1000 1500,1055 1525,1105 1540,1118 1568,1118`,
`50,1118 115,1114 135,1070 155,990 175,935 195,923 215,950 235,1030 255,1110 280,1162 300,1130 320,1065 335,1020 350,1008 370,1028 395,1040 420,1005 450,976 475,985 500,1035 530,1052 550,1045 570,990 590,920 615,890 630,900 645,970 665,1070 685,1150 705,1205 720,1213 740,1170 770,1110 800,1050 830,1015 880,992 900,1005 920,1070 945,1145 965,1158 985,1110 1005,1030 1020,1003 1040,1003 1065,1025 1095,1040 1110,1025`)));
path('slow', toPath(join(lowerY,
`224,905 240,945 255,1000 270,1045 285,1080 310,1099 330,1088 350,1067 370,1060 390,1075 410,1110 430,1145 450,1156 470,1140 485,1085 500,1010 515,945 530,895 550,871 570,878 590,910 620,970 660,1030 690,1085 715,1140 740,1155 765,1135 785,1070 810,1010 835,992 860,1005 885,1023 910,1024 940,998 970,989 1000,1005 1025,1060 1050,1125 1075,1154 1095,1154 1115,1130 1140,1070 1170,1005 1195,983 1220,988 1245,1025 1285,1110 1310,1190 1335,1255 1355,1273 1375,1255 1390,1190 1410,1040 1425,930 1440,830 1455,765 1465,752 1480,780 1500,870 1520,980 1540,1055 1555,1072 1566,1070`,
`110,1050 135,1038 160,1055 190,1078 210,1070 230,1030 250,985 270,967 290,975 310,1015 335,1105 355,1165 375,1186 395,1165 415,1085 435,1000 460,976 485,990 510,1018 530,1005 550,950 570,912 583,907 600,930 620,1000 645,1105 665,1180 690,1208 715,1190 740,1120 760,1050 780,960 800,890 820,860 840,885 860,950 880,1040 900,1130 925,1176 945,1145 970,1070 995,1010 1020,998 1050,996 1075,965 1100,930 1120,918 1135,930 1155,990 1175,1080 1195,1165 1215,1193 1235,1165 1260,1080 1285,1025 1310,1018 1340,1045 1380,1077 1400,1070 1430,1020 1460,988 1475,985 1500,1005 1530,1060 1568,1108`,
`55,1114 120,1114 140,1098 165,1030 185,970 205,943 218,938 235,950 260,1030 280,1110 300,1143 315,1140 335,1080 360,1028 380,1020 405,1030 430,1015 465,986 490,995 520,1035 545,1048 570,1040 595,980 620,920 635,907 655,930 680,1020 700,1110 720,1180 740,1200 760,1180 780,1130 810,1070 845,1025 890,997 915,1005 945,1075 965,1125 985,1140 1000,1118 1020,1055 1045,1015 1060,1008 1080,1022 1105,1038`)));
const defs = add('defs', {});
defs.innerHTML = '<clipPath id="inside"><rect x="91" y="89" width="1747" height="901"/></clipPath><clipPath id="high"><rect x="91" y="780" width="1749" height="44"/></clipPath><clipPath id="mid"><rect x="91" y="824" width="1749" height="108"/></clipPath><clipPath id="low"><rect x="91" y="932" width="1749" height="58"/></clipPath>';
['high', 'mid', 'low'].forEach(id => path('cci-' + id, toPath(cci), { 'clip-path': `url(#${id})` }));
const dot = (x, y, fill) => add('circle', { cx: x, cy: y, r: 4, fill });
[[383, 800], [755, 800], [998, 802], [1109, 800], [1172, 800], [1604, 800]].forEach(p => dot(p[0], p[1], '#00ffff'));
[[98, 982], [152, 981], [200, 982], [239, 984], [653, 983], [1439, 982]].forEach(p => dot(p[0], p[1], RED));

/* axes */
const pct = y => ((y - 89) / 901 * 100).toFixed(2) + '%';
function put(host, cls, style, text) {
  const el = document.createElement('div');
  el.className = cls;
  Object.assign(el.style, style);
  if (text) el.textContent = text;
  host.appendChild(el);
}
const left = document.getElementById('axisLeft'), right = document.getElementById('axisRight');
const scale = (host, rows) => rows.forEach(([y, text]) => {
  put(host, 'tick', { top: pct(y) });
  if (text) put(host, 'tick-label', { top: pct(y + 1) }, text);
});
const pricesAxis = [[124, '24500'], [171, '24000'], [218, '23500'], [265, '23000'], [313, '22500'], [360, '22000'], [407, '21500'], [454, '21000'], [502, '20500']];
const leoAxis = [[596, '6.00'], [615], [634, '2.00'], [652], [671, '-2.00'], [690], [709, '-6.00'], [728], [746, '-10.00']];
scale(left, pricesAxis); scale(right, pricesAxis);
scale(left, leoAxis); scale(right, leoAxis);
scale(left, [[794, '1,000....'], [816], [837, '600.00'], [859], [881, '200.00'], [924, '-200.00'], [945], [967, '-600.00']]);
scale(right, [[788, '200.00'], [810], [833, '100.00'], [855], [877, '0.00'], [900], [922, '-100.00'], [967, '-200.00']]);
[left, right].forEach(h => { put(h, 'divider', { top: pct(558) }); put(h, 'divider', { top: pct(774) }); });
const badge = (host, y, color, text) => put(host, 'badge', { top: pct(y), background: color }, text);
badge(left, 905, '#800080'); badge(left, 903, '#0000ff', '27.27'); badge(left, 898, '#ff0000', '68.43');
badge(right, 424, '#ffff00', '21350'); badge(right, 410, '#ff0000', '21497');
badge(right, 478, '#0000ff', '20779'); badge(right, 491, '#6464ff', '20645');
badge(right, 580, '#ff0000', '8.00'); badge(right, 618, '#6b6b00', '4.00'); badge(right, 655, '#0000ff', '0.00');
badge(right, 693, '#00ffff', '-3.98'); badge(right, 731, '#ff0000', '-8.00');
badge(right, 827, '#808080', '120.00'); badge(right, 934, '#808080', '-120.00'); badge(right, 944, '#00ffff', '-141.22');

/* time axis */
const times = document.getElementById('times');
const tx = x => ((x - 90) / 1828 * 100).toFixed(2) + '%';
['5/05', '5/11', '5/17', '5/24', '5/30', '6/06', '6/13', '6/17', '6/24', '6/30', '7/07', '7/14', '7/20', '7/27', '8/02', '8/09', '8/17', '8/23', '8/30', '9/05', '9/12', '9/19', '9/23', '9/30']
  .forEach((t, i) => put(times, 'time-label', { left: tx(i ? 148 + 69 * i : 157) }, t));
put(times, 'time-tick', { left: tx(141) }); put(times, 'time-tick month', { left: tx(150) });
for (let i = 0; i < 24; i++) put(times, 'time-tick', { left: tx(210 + 69 * i) });

/* window buttons of the child windows */
const mdi = [['Minimize', '<path d="M1 7h5v2H1z"/>'], ['Restore', '<path d="M3.500 3V1.500h5v4H7M1.500 4.500h5v4h-5z" fill="none" stroke="#6a7888" stroke-width="1.500"/>'], ['Close', '<path d="M1 1l7 8M8 1L1 9" stroke="#6a7888" stroke-width="2"/>']]
  .map(([n, s]) => `<button class="mdi" aria-label="${n}"><svg width="10" height="10" fill="#6a7888">${s}</svg></button>`).join('');
document.getElementById('mdi').innerHTML = mdi;
document.getElementById('floatButtons').innerHTML = mdi;

/* toolbar */
const p = (d, stroke = '#000', fill = 'none', w = 1) => `<path d="${d}" stroke="${stroke}" fill="${fill}" stroke-width="${w}"/>`;
const r = (x, y, w, h, fill, stroke = 'none') => `<rect x="${x}" y="${y}" width="${w}" height="${h}" fill="${fill}" stroke="${stroke}"/>`;
const navy = '#000080', olive = '#808000';
const icons = {
  New: p('M2.500 1.500h8l3 3v11h-11zM10.500 1.500v3h3', '#000', '#fff'),
  Open: p('M.5 14.500v-9h4l1 1h6v3', '#000', '#ffff80') + p('M.5 14.500l4-5h11l-4 5z', '#000', olive) + p('M9 3.500c2-2 4-1 5 1M14.500 1v4h-3'),
  'Save all': r(4.5, .5, 11, 11, olive, '#000') + r(2.5, 2.5, 11, 11, olive, '#000') + r(.5, 4.5, 11, 11, olive, '#000') + r(3, 5, 6, 4, '#fff') + r(3, 11, 6, 4, '#000') + r(4, 12, 2, 3, '#fff'),
  'New from mail': r(.5, .5, 8, 6, '#ffffa0', '#000') + p('M.5.5l4 4 4-4') + p('M6.500 6.500h5l3 3v6h-8z', '#000', '#fff') + p('M3 8v4h2'),
  'Close workspace': p('M.5 15.500v-10h5l1 1h8v9z', '#000', olive) + p('M15 7c0-3-1-4-3-5M12 5V1.500h3.500', navy),
  'Print preview': p('M3.500 1v-.5h7l3 3v12h-10z', '#000', '#fff') + r(1.5, 5.5, 12, 7, '#fff', navy) + r(2, 6, 12, 3, '#1818c0'),
  Print: p('M5 6l1-5.500h7L12 6', '#000', '#fff') + p('M1 8l3-2h9l2 2v4l-3 3H2l-1-2z', '#000', '#ddd') + p('M2 10.500h11M3 13h9') + p('M7 3h4'),
  'Undo bars': r(1, 1, 14, 3, navy) + p('M4 6.500h11M7 14.500h8') + p('M7 10.500h8M2 10.500h5M5 7.500l-3 3 3 3', navy),
  'Redo bars': r(1, 1, 14, 3, '#00c000') + r(2, 1, 3, 3, RED) + r(11, 1, 3, 3, RED) + p('M4 6.500h11M7 14.500h8') + p('M7 10.500h8M2 10.500h5M5 7.500l-3 3 3 3', navy),
  Lock: p('M5 8V4c0-4 6-4 6 0v4') + r(2.5, 7.5, 11, 8, '#f0f080', '#000') + r(7, 9, 2, 4, '#000'),
  Connect: p('M1 15l3-5 3 3-1 3M15 15l-4-6-3 3 1 3', '#444') + r(5, 8, 4, 3, '#00d8d8') + p('M8 7l6-6M10 8l6-6M7 5l6-4', navy, 'none', 1),
  Cubes: p('M1 1h5l2 3v4H3L1 5z', '#000', '#f0e020') + p('M8 4l3-3 4 2v5l-4 1-3-2z', '#000', '#10b010') + p('M2 8l4-1 3 2v5l-4 1-3-2z', '#000', '#1010d0') + p('M9 9l3-1 3 2v4l-3 2-3-2z', '#000', '#d01010'),
  'Symbol lookup': p('M3 7V1.500h12V10M6 1v4M9 1v4M12 1v4', '#5a6080') + r(.5, 6.5, 5, 6, '#eee', '#777') + '<circle cx="9" cy="8" r="4" fill="#90f0ff" stroke="#777"/>' + p('M12 11l3 4', '#007070', 'none', 2),
  Trading: r(2.5, .5, 13, 14, '#fff', '#000') + r(3, 1, 12, 3, '#000') + p('M13 6c-4-2-4 2-2 2s3 4-2 2M11 5v8', '#1010b0', 'none', 1) + r(0, 7, 6, 8, '#a09000') + p('M0 9.500h6M0 12.500h6'),
  'Trading off': r(4, 1, 11, 12, '#999') + r(1, 8, 5, 7, '#888') + p('M5 5.500h9M5 8.500h9M8.500 2v11', '#eee'),
  Table: r(.5, 1.5, 15, 14, '#fff', '#000') + r(1, 2, 15, 3, '#000') + r(1, 5, 11, 10, '#ffffa0') + p('M3 7.500h3M3 9.500h3M3 11.500h3M8 7.500h3M8 9.500h3M8 11.500h3M12.500 5v11'),
  Indicator: p('M1.500 5v3M3.500 3v3', '#d00000') + p('M5.500 1v4M7.500 4v3M9.500 1v3M11.500 2v4M13.500 3v5', '#1010d0') + p('M1 13l3 0 3-3 2 0 3 3 3 0', '#a00000') + p('M1 10l3 4', navy) + p('M1 15.500h14.500V2', '#aaa'),
  Strategy: p('M4.500 7v7M2 11.500l2.500 2.500L7 11.500', '#a00000') + p('M10.500 12V4M8 6.500L10.500 4 13 6.500', navy) + p('M2 15.500h13.500V2', '#aaa'),
  'Format all': r(5.5, .5, 10, 10, '#fff', '#000') + r(3.5, 2.5, 10, 10, '#fff', '#000') + r(.5, 4.500, 11, 11, '#fff', '#000') + p('M2 12l3-5 3 4 3-4', '#1010d0') + r(6, 11, 2, 3, '#c00000'),
  'Quick edit': p('M2 7l5-5h5l3 3-3 4H3z', '#333', '#ddd') + p('M4 5l6 2M5 3l6 3', '#000') + r(12, 1, 4, 5, navy) + p('M2 11.500h11v3H2z', '#333', '#fff') + p('M14.500 6v9', navy),
  'Property edit': r(1.5, 6.5, 10, 9, '#fff', '#000') + r(2, 7, 10, 2, '#000') + p('M2 5l5-4h5l2 3-3 3', '#333', '#ddd') + r(12, 1, 4, 5, navy) + p('M4 4l6 2'),
  'Time calendar': r(1.5, 2.5, 13, 11, '#fff', '#000') + p('M2 2.500h13M3 .5v4M6 .5v4M9 .5v4M12 .5v4', '#00a000') + r(3, 6, 4, 4, '#e02020') + '<circle cx="11" cy="11" r="4.500" fill="#fff" stroke="#000"/>' + p('M11 8v3h2'),
  'Time bars': '<circle cx="6" cy="5" r="4.500" fill="#fff" stroke="#000"/>' + p('M6 2v3h2') + p('M3.500 10v5M6.500 9v6M9.500 10v5M12.500 5v8M15 3v7', navy, 'none', 1) + p('M8 12l3-2', '#a00'),
  'Chart style': r(0, 0, 16, 16, '#000') + p('M4.500 4v6M7.500 7v5M10.500 4v8', '#00d000') + p('M15 0v15H0', '#d00000', 'none', 2),
  'OHLC bars': p('M4.500 3v10M1 12h3M5 4h3M10.500 1v10M8 10h3M11 2h3', navy, 'none', 2) + p('M1 15.500h14.500V4', '#aaa'),
  Candles: r(3, 4, 4, 8, navy) + p('M5 2v12M11 1v12', navy) + r(9.5, 3.5, 3, 7, '#fff', navy) + p('M1 15.500h14.500V4', '#aaa'),
  'Less space': p('M0 8h5M3 5.500L5.500 8 3 10.500M16 8h-5M13 5.500L10.500 8l2.500 2.500') + p('M6.500 2v9M9.500 6v9', '#1010d0'),
  'More space': p('M3 8h4M5 5.500L2.500 8 5 10.500M14 8H9M11 5.500L13.500 8 11 10.500') + p('M.5 1v9M15.500 6v9', '#1010d0'),
  'Zoom in': '<circle cx="6" cy="6" r="5" fill="#e0ffff" stroke="#000" stroke-width="1.500"/>' + p('M3 6h6M6 3v6', '#000', 'none', 2) + p('M10 10l5 5', navy, 'none', 3),
  'Zoom out': '<circle cx="6" cy="6" r="5" fill="none" stroke="#aaa" stroke-width="1.500"/>' + p('M3 6h6', '#aaa', 'none', 2) + p('M10 10l5 5', '#aaa', 'none', 3),
  Pointer: p('M4.500 1v12l3-3 2.500 5 2-1-2.500-4.500h4z', '#000', '#fff'),
  'Text tool': r(0, 1, 13, 10, '#000') + r(0, 1, 13, 2, '#1010d0') + r(11, 1, 2, 2, '#e02020') + p('M1 8l2-2 2 3 2-3 2 3', '#00c000') + p('M9 8h7M12.500 8v7M11 15h3', '#000', 'none', 2),
  Tools: p('M1 15L12 4', '#806000', 'none', 2) + p('M3 5l11 10', '#000', 'none', 2) + p('M1 6l3-3 3 1-4 4z', '#000', '#888') + p('M9 3l3-2 1 3 3 1-3 2-4-1z', '#000', '#000'),
  'Add sheet': r(7.5, .5, 8, 11, '#ffffa0', '#000') + p('M9 3.500h5M9 5.500h5M9 7.500h5M11.500 1v9') + p('M0 3.500h6M3 .5v6', '#1010e0', 'none', 2) + r(3.5, 7.5, 7, 5, '#fff', navy) + p('M1 14.500h9v-3', navy),
  Note: p('M1.500 1.500h12v10h-2l-2 3v-3h-8z', '#999', '#ddd') + p('M3 4.500h9M3 6.500h9M3 8.500h9', '#999'),
  Pitchfork: p('M1 15L12 4M7 9V4l4-3M7 9h4l4-3M5 5l4-4', '#000'),
  'Vertical lines': p('M.5 0v16M3.500 0v16M6.500 0v16M10.500 0v16M15.500 0v16'),
  'Horizontal lines': p('M0 2.500h16M0 7.500h16M0 11.500h16M0 15.500h16'),
  Calculator: p('M0 .5h16M0 3.500h16M0 5.500h4M12 5.500h4') + r(4.5, 4.5, 8, 11, '#fff', navy) + r(6, 6, 5, 2, '#1010d0') + p('M6 10.500h5M6 12.500h5', '#1010d0', 'none', 1),
  Arcs: p('M1 14c0-10 8-12 12-8M4 14c0-6 5-8 8-5M7 14c0-3 2-4 4-3M3 15L14 3'),
  'Speed fan': p('M1 15L14 2M1 15l14-7M1 15l14-3', '#000').replace('/>', ' stroke-dasharray="1 2"/>') + p('M0 15.500h16'),
  Retracement: p('M1 13l4-5 3 6 0-12M8 2.500h7M8 5.500h7M8 8.500h7M8 11.500h7'),
  'Time retracement': p('M0 2l7 6M6.500 1v14M9.500 1v14M12.500 1v14M15.500 1v14'),
  'Gann fan': p('M0 15.500h16M1 15L13 1M1 15l14-8') + p('M6 13h9M8 10h6').replace('/>', ' stroke-dasharray="1 2"/>'),
  'Horizontal arrow': p('M2 8h13M5 5L2 8l3 3M12 5l3 3-3 3', '#000', 'none', 1.5),
  'Parallel lines': p('M1 12L11 2M4 14L14 3M7 15l8-9'),
  Cycles: p('M1 14V8c0-9 14-9 14 0v6M1 14c0-5 4-5 4 0 0-5 5-5 5 0 0-5 5-5 5 0'),
  Pencil: p('M0 14.500h6c3 0 3-1 3-3', '#000', 'none', 2) + p('M9 10l4-9h3l-4 10-3 2z', '#000', '#f0e040'),
  Curve: p('M1 14.500c7 0 10-5 11-11'),
  'Down arrow': p('M7 3h3v6h2l-3.500 5L5 9h2z', 'none', RED),
  'Up arrow': p('M7 14V8H5l3.500-5L12 8h-2v6z', 'none', '#0000ff'),
  Ellipse: '<ellipse cx="8" cy="8" rx="7" ry="6.500" fill="none" stroke="#000"/>',
  Rectangle: p('M1.500 1.500h12v13h-12z'),
  'Text abc': '<text x="0" y="12" font-size="11" font-family="Liberation Sans">abc</text>'
};
const barItems = {
  file: 'New,Open,Save all,New from mail,Close workspace,|,Print preview,Print,|,Undo bars,Redo bars,Lock,Connect,Cubes,|',
  lookup: 'Symbol lookup',
  chart: 'Trading,Trading off,Table,|,Indicator,Strategy,Format all,|,Quick edit,Property edit,|,Time calendar,Time bars,Chart style,OHLC bars,Candles,|,Less space,More space,|,Zoom in,Zoom out,|,Pointer,Text tool,|,Tools,|,Add sheet,|,Note',
  draw: 'Pitchfork,Vertical lines,Horizontal lines,Calculator,Arcs,Speed fan,Retracement,Time retracement,Gann fan,Horizontal arrow,Parallel lines,Cycles,Pencil,|,Curve,Down arrow,Up arrow,Ellipse,Rectangle,Text abc'
};
document.querySelectorAll('[data-bar]').forEach(bar => {
  bar.innerHTML = barItems[bar.dataset.bar].split(',').map(n => n === '|' ? '<span class="tool-sep"></span>'
    : `<button class="tool${n === 'Pointer' ? ' pressed' : ''}" aria-label="${n}"><svg width="17" height="17" viewBox="0 0 17 17">${icons[n]}</svg></button>`).join('');
});

/* workspace tabs */
const tabs = document.getElementById('tabs');
[['STOX_TF60', 88], ['STOX_TF120', 95], ['STOX TF240', 92], ['STOX _100', 84], ['STOX_TF30', 87], ['FIB_TF60', 75], ['FIB_TF120', 84], ['FIB TF240', 76], ['FIB_100', 67], ['FIB_TF30', 75], ['FIB Frame bassi', 113], ['STOXX frame bassi', 129], ['No PREZZI', 82], ['Posizioni1', 81]].forEach(([name, width], i) => {
  const b = document.createElement('button');
  b.className = 'tab' + (i === 6 ? ' active' : '');
  b.style.width = width + 'px';
  b.innerHTML = `<svg width="7" height="17"><path d="M0 0l5 16${i ? 'M6 0L0 17' : ''}" stroke="#000" fill="none"/></svg>${name}`;
  tabs.appendChild(b);
});
const end = document.createElement('span');
end.className = 'tab-end';
end.innerHTML = '<svg width="7" height="17"><path d="M6 0L0 17" stroke="#000"/></svg>';
tabs.appendChild(end);
```
